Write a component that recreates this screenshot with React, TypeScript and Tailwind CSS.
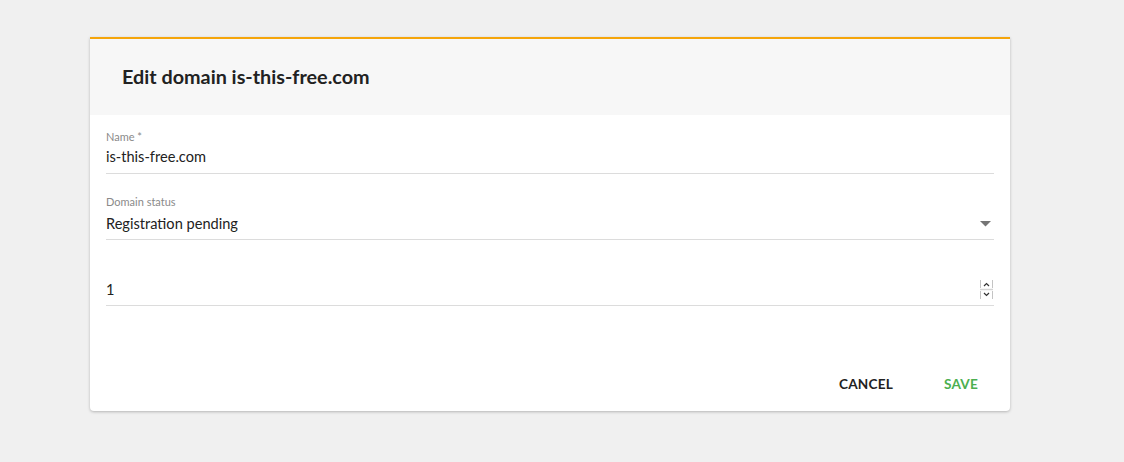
import React from "react";

export default function App() {
  return (
    <div
      className="w-[1124px] h-[462px] bg-[#f0f0f0] pt-[37px] pl-[90px]"
      style={{ fontFamily: "Lato, 'Open Sans', sans-serif" }}
    >
      <div className="w-[920px] bg-white border-t-2 border-[#f5a50b] rounded-b-[4px] shadow-[0_1px_3px_rgba(0,0,0,0.25)]">
        <div className="h-[76px] bg-[#f7f7f7] flex items-center pl-[32px]">
          <h1 className="text-[19.8px] font-bold text-[#222] leading-none">Edit domain is-this-free.com</h1>
        </div>
        <div className="px-[16px] pt-[15px] pb-[9px]">
          {/* Name */}
          <div className="border-b border-[#dcdcdc] pb-[7px]">
            <div className="h-[14px] text-[11px] leading-[14px] text-[#8a8a8a]">Name *</div>
            <div className="mt-[4px] h-[18px] text-[14.6px] leading-[18px] text-[#222]">is-this-free.com</div>
          </div>
          {/* Domain status */}
          <div className="mt-[21px] border-b border-[#dcdcdc] pb-[6px]">
            <div className="h-[14px] text-[11px] leading-[14px] text-[#8a8a8a]">Domain status</div>
            <div className="mt-[6px] h-[18px] flex items-center justify-between">
              <span className="text-[14.6px] leading-[18px] text-[#222]">Registration pending</span>
              <svg width="11" height="6" viewBox="0 0 11 6" className="mr-[3px]">
                <path d="M0 0 L11 0 L5.5 5.5 Z" fill="#757575" />
              </svg>
            </div>
          </div>
          {/* Number */}
          <div className="mt-[41px] border-b border-[#dcdcdc] pb-[6px]">
            <div className="h-[18px] flex items-center justify-between">
              <span className="text-[14.6px] leading-[18px] text-[#222]">1</span>
              <svg width="13" height="19" viewBox="0 0 13 19" className="mr-[1px] -mt-[1px]">
                <path d="M0.5 0 V8 M12.5 0 V8 M0.5 11 V19 M12.5 11 V19" stroke="#c4c4c4" strokeWidth="1" />
                <path d="M0 9.5 H13" stroke="#d4d4d4" strokeWidth="1.5" />
                <path d="M4 6 L6.5 3.5 L9 6" stroke="#333" strokeWidth="1.2" fill="none" />
                <path d="M4 13 L6.5 15.5 L9 13" stroke="#333" strokeWidth="1.2" fill="none" />
              </svg>
            </div>
          </div>
          {/* Buttons */}
          <div className="mt-[60px] h-[36px] flex items-center justify-end pr-[16px] gap-[51px]">
            <button className="text-[13.6px] font-bold text-[#222] tracking-[0.2px]">CANCEL</button>
            <button className="text-[13.6px] font-bold text-[#4caf50] tracking-[0.2px]">SAVE</button>
          </div>
        </div>
      </div>
    </div>
  );
}
